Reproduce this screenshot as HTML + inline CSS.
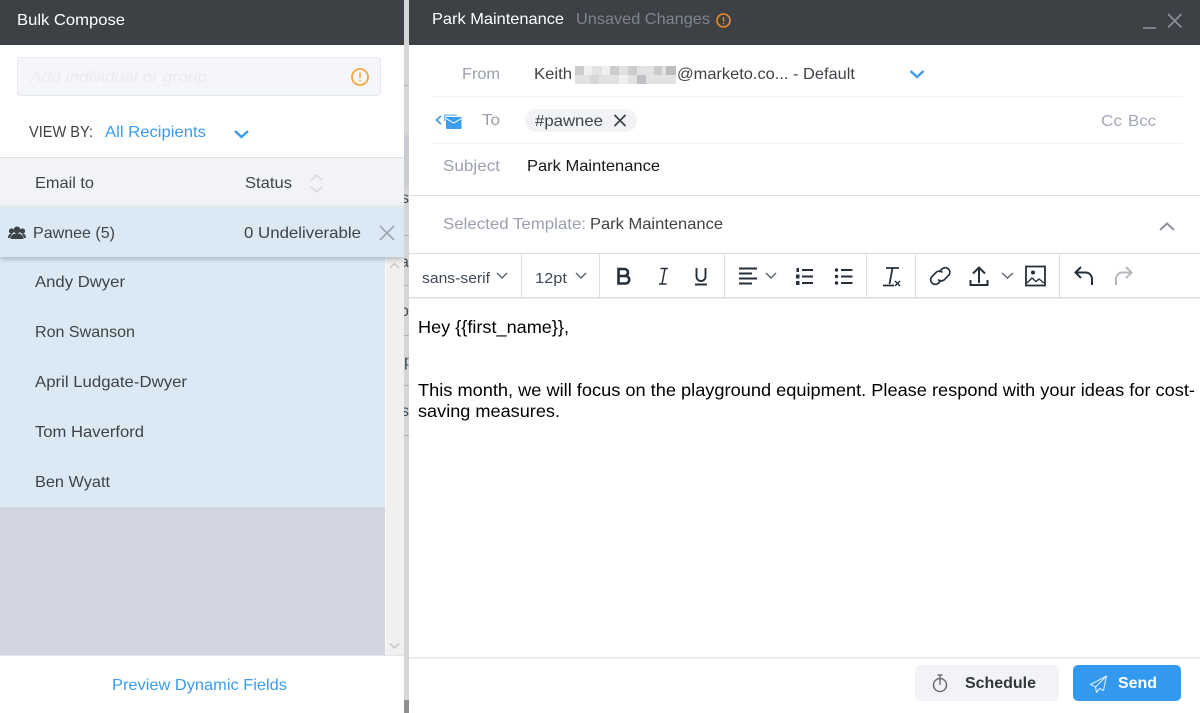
<!DOCTYPE html>
<html><head><meta charset="utf-8"><title>Bulk Compose</title>
<style>
html,body{margin:0;padding:0;background:#fff;width:1200px;height:713px;overflow:hidden}
svg{display:block}
text{font-family:"Liberation Sans",sans-serif;font-size:16px}
.l{fill:#9aa0ac}.d{fill:#3f4347}.b{fill:#3a9bef}
</style></head><body>
<svg width="1200" height="713" viewBox="0 0 1200 713" xmlns="http://www.w3.org/2000/svg">
<defs>
<filter id="sh" x="-5%" y="-30%" width="110%" height="170%"><feDropShadow dx="0" dy="2" stdDeviation="3" flood-color="#000" flood-opacity=".25"/></filter>
<clipPath id="st"><rect x="404" y="0" width="4.500" height="713"/></clipPath>
</defs>
<rect width="1200" height="713" fill="#fff"/>
<!-- left panel -->
<rect x="0" y="0" width="404" height="45" fill="#3d4145"/>
<text x="17" y="25" fill="#fff" textLength="108" lengthAdjust="spacingAndGlyphs">Bulk Compose</text>
<rect x="17.500" y="57.500" width="363" height="38" rx="3" fill="#f5f6fa" stroke="#e6e8ef"/>
<text x="30" y="82" fill="#eaebf0" style="font-style:italic" textLength="177" lengthAdjust="spacingAndGlyphs">Add individual or group</text>
<circle cx="360" cy="77" r="8" fill="none" stroke="#f7a540" stroke-width="1.800"/>
<path d="M360 72.500v5.500M360 79.800v1.600" stroke="#f7a540" stroke-width="1.600" fill="none"/>
<text x="29" y="137" fill="#3c4043" textLength="64" lengthAdjust="spacingAndGlyphs">VIEW BY:</text>
<text x="105" y="137" class="b" textLength="101" lengthAdjust="spacingAndGlyphs">All Recipients</text>
<path d="M235 131l6.500 6 6.500-6" fill="none" stroke="#3a9bef" stroke-width="2.400"/>
<rect x="0" y="157" width="404" height="50" fill="#f2f3f7"/>
<rect x="0" y="157" width="404" height="1" fill="#e3e4e8"/>
<text x="35" y="188" class="d" textLength="59" lengthAdjust="spacingAndGlyphs">Email to</text>
<text x="245" y="188" class="d" textLength="47" lengthAdjust="spacingAndGlyphs">Status</text>
<path d="M311 180.500l5.500-5.500 5.500 5.500M311 186.500l5.500 5.500 5.500-5.500" fill="none" stroke="#d5d7dd" stroke-width="1.500"/>
<!-- rows -->
<rect x="0" y="257" width="385" height="250" fill="#dbe9f5"/>
<rect x="0" y="507" width="385" height="148" fill="#d1d5e0"/>
<rect x="385" y="257" width="19" height="398" fill="#f0f0f0"/>
<rect x="385" y="257" width="1" height="398" fill="#fafafa"/>
<path d="M390 648.500l4.500-4.500M398.500 643.500l-4.500 4.500" fill="none" stroke="#fff" stroke-width="0"/>
<path d="M390 643.500l4.500 4.500 4.500-4.500" fill="none" stroke="#c4c4c4" stroke-width="1.500"/>
<path d="M390 268l4.500-4.500 4.500 4.500" fill="none" stroke="#c8c8c8" stroke-width="1.500"/>
<rect x="0" y="655" width="404" height="1" fill="#e3e5ec"/>
<text x="35" y="287" class="d" textLength="90" lengthAdjust="spacingAndGlyphs">Andy Dwyer</text>
<text x="35" y="337" class="d" textLength="100" lengthAdjust="spacingAndGlyphs">Ron Swanson</text>
<text x="35" y="387" class="d" textLength="152" lengthAdjust="spacingAndGlyphs">April Ludgate-Dwyer</text>
<text x="35" y="437" class="d" textLength="109" lengthAdjust="spacingAndGlyphs">Tom Haverford</text>
<text x="35" y="487" class="d" textLength="75" lengthAdjust="spacingAndGlyphs">Ben Wyatt</text>
<text x="112" y="690" class="b" textLength="175" lengthAdjust="spacingAndGlyphs">Preview Dynamic Fields</text>
<!-- selected row -->
<rect x="0" y="207" width="404" height="50" fill="#dbe9f5" filter="url(#sh)"/>
<g fill="#3f4347"><circle cx="17" cy="230" r="3.500"/><path d="M10.500 239c0-4 3-5.500 6.500-5.500s6.500 1.500 6.500 5.500z"/><circle cx="11.500" cy="231" r="2.600"/><circle cx="22.500" cy="231" r="2.600"/><path d="M8 238c0-3 1.500-4.500 4-4.500l-2 4.500zM26 238c0-3-1.500-4.500-4-4.500l2 4.500z"/></g>
<text x="33" y="238" class="d" textLength="82" lengthAdjust="spacingAndGlyphs">Pawnee (5)</text>
<text x="244" y="238" class="d" textLength="117" lengthAdjust="spacingAndGlyphs">0 Undeliverable</text>
<path d="M380 226l14 14M394 226l-14 14" stroke="#9ea3ad" stroke-width="1.600" fill="none"/>
<!-- divider strip -->
<rect x="404" y="0" width="5" height="713" fill="#d6d6d6"/>
<rect x="404" y="135" width="5" height="52" fill="#c9ccd1"/>
<rect x="404" y="700" width="5" height="13" fill="#909090"/>
<g fill="#b4b4b4"><rect x="404" y="85" width="5" height="1"/><rect x="404" y="235" width="5" height="1"/><rect x="404" y="285" width="5" height="1"/><rect x="404" y="335" width="5" height="1"/><rect x="404" y="385" width="5" height="1"/><rect x="404" y="435" width="5" height="1"/></g>
<g clip-path="url(#st)" fill="#3f4a55">
<text x="401" y="203">s</text>
<text x="400" y="267">a</text>
<text x="400" y="316">o</text>
<text x="404" y="366">p</text>
<text x="401" y="416">s</text>
</g>
<!-- right header -->
<rect x="409" y="0" width="791" height="45" fill="#3d4145"/>
<text x="432" y="24" fill="#fff" textLength="132" lengthAdjust="spacingAndGlyphs">Park Maintenance</text>
<text x="576" y="24" fill="#7d8590" textLength="134" lengthAdjust="spacingAndGlyphs">Unsaved Changes</text>
<circle cx="723.500" cy="20.500" r="6.500" fill="none" stroke="#f08a2c" stroke-width="1.600"/>
<path d="M723.500 17v4.500M723.500 23v1.400" stroke="#f08a2c" stroke-width="1.400" fill="none"/>
<path d="M1143 28h13" stroke="#8b929b" stroke-width="1.600"/>
<path d="M1168 14l13.500 13.500M1181.500 14l-13.500 13.500" stroke="#8b929b" stroke-width="1.600" fill="none"/>
<!-- from -->
<text x="462" y="79" class="l" textLength="38" lengthAdjust="spacingAndGlyphs">From</text>
<text x="534" y="79" class="d" textLength="38" lengthAdjust="spacingAndGlyphs">Keith</text>
<rect x="575" y="66" width="101" height="18" fill="#e2e2e2"/>
<g fill="#cacccd"><rect x="575" y="66" width="9" height="9"/><rect x="610" y="66" width="9" height="9"/><rect x="628" y="66" width="9" height="9"/><rect x="654" y="66" width="8" height="9"/><rect x="637" y="75" width="9" height="9" fill="#bcc0c5"/><rect x="590" y="75" width="9" height="9" fill="#d6d6d6"/><rect x="666" y="66" width="10" height="9" fill="#bdbdbd"/></g>
<g fill="#efefef"><rect x="584" y="66" width="8" height="9"/><rect x="619" y="75" width="9" height="9"/><rect x="602" y="66" width="8" height="9"/></g>
<text x="677" y="79" class="d" textLength="178" lengthAdjust="spacingAndGlyphs">@marketo.co... - Default</text>
<path d="M910.500 71l6.500 6 6.500-6" fill="none" stroke="#3a9bef" stroke-width="2.400"/>
<rect x="432" y="96" width="750" height="1" fill="#f1f2f5"/>
<!-- to -->
<path d="M441 116l-4.500 4 4.500 4" fill="none" stroke="#3a9bef" stroke-width="1.600"/>
<path d="M444 114.500h13v1.300h-13zM444 116h1.500v5h-1.500z" fill="#6db5f3"/>
<rect x="446" y="117" width="15.500" height="12" rx="1" fill="#3a9bef"/>
<path d="M446 118.500l7.700 4.500 7.800-4.500" fill="none" stroke="#fff" stroke-width="1"/>
<text x="482" y="125" class="l" textLength="18" lengthAdjust="spacingAndGlyphs">To</text>
<rect x="525" y="109" width="112" height="23" rx="11.500" fill="#f2f3f7"/>
<text x="535" y="126" class="d" textLength="68" lengthAdjust="spacingAndGlyphs">#pawnee</text>
<path d="M614.500 115l11 11M625.500 115l-11 11" stroke="#3f4347" stroke-width="1.700" fill="none"/>
<text x="1101" y="126" fill="#a3a9b5" textLength="21" lengthAdjust="spacingAndGlyphs">Cc</text>
<text x="1128" y="126" fill="#a3a9b5" textLength="28" lengthAdjust="spacingAndGlyphs">Bcc</text>
<rect x="432" y="143" width="750" height="1" fill="#f1f2f5"/>
<!-- subject -->
<text x="443" y="171" class="l" textLength="57" lengthAdjust="spacingAndGlyphs">Subject</text>
<text x="527" y="171" fill="#14171a" textLength="133" lengthAdjust="spacingAndGlyphs">Park Maintenance</text>
<rect x="409" y="195" width="791" height="1" fill="#dfe0e6"/>
<!-- template -->
<text x="443" y="229" class="l" textLength="143" lengthAdjust="spacingAndGlyphs">Selected Template:</text>
<text x="590" y="229" class="d" textLength="133" lengthAdjust="spacingAndGlyphs">Park Maintenance</text>
<path d="M1160 230l7-6.500 7 6.500" fill="none" stroke="#8d929b" stroke-width="2"/>
<rect x="409" y="253" width="791" height="1" fill="#dedede"/>
<!-- toolbar -->
<rect x="409" y="297" width="791" height="1.500" fill="#dedede"/>
<g fill="#dedede"><rect x="521" y="254" width="1" height="44"/><rect x="599" y="254" width="1" height="44"/><rect x="724" y="254" width="1" height="44"/><rect x="866" y="254" width="1" height="44"/><rect x="915" y="254" width="1" height="44"/><rect x="1059" y="254" width="1" height="44"/></g>
<text x="422" y="283" style="font-size:15px" fill="#3f4a55" textLength="68" lengthAdjust="spacingAndGlyphs">sans-serif</text>
<path d="M497 273l5 5 5-5" fill="none" stroke="#5f6770" stroke-width="1.500"/>
<text x="535" y="283" style="font-size:15px" fill="#3f4a55" textLength="32" lengthAdjust="spacingAndGlyphs">12pt</text>
<path d="M576 273l5 5 5-5" fill="none" stroke="#5f6770" stroke-width="1.500"/>
<g fill="none" stroke="#25303b">
<path d="M618.500 269h6a3.500 3.500 0 0 1 0 7h-6zM618.500 276h7a3.500 3.500 0 0 1 0 7.500h-7z" stroke-width="2.600"/>
<path d="M660.500 268.500h7.500M659 284h7.500M665 268.500l-3 15.500" stroke-width="1.500"/>
<path d="M696.500 268v8.500a4.500 4.500 0 0 0 9 0v-8.500M695 284.500h12" stroke-width="1.900"/>
<path d="M739 268.500h18M739 273.500h13M739 278.500h18M739 283.500h13" stroke-width="2"/>
<path d="M802 270h11M802 276.500h11M802 283h11" stroke-width="2"/>
<path d="M841 270h11.500M841 276.500h11.500M841 283h11.500" stroke-width="2"/>
<path d="M886 268h13M892.500 268l-3 16M883 285.500h11" stroke-width="1.800"/>
<path d="M895 281l5 5M900 281l-5 5" stroke-width="1.400"/>
<path d="M939 272l3-3a4.500 4.500 0 0 1 6.500 6.500l-4 4a4.500 4.500 0 0 1-6.500 0M941.500 280l-3 3a4.500 4.500 0 0 1-6.500-6.500l4-4a4.500 4.500 0 0 1 6.500 0" stroke-width="1.600"/>
<path d="M979 283v-15M973 273.500l6-6 6 6M970.500 280v5h17v-5" stroke-width="2"/>
<rect x="1026" y="266.500" width="19" height="19" stroke-width="1.800"/>
<path d="M1027 283l5-5 4 3.500 3-2.500 5 4" stroke-width="1.400"/>
<path d="M1081 267l-5.500 5.500 5.500 5.500M1075.500 272.500h10a6.500 6.500 0 0 1 6.500 6.500v6" stroke-width="2"/>
</g>
<circle cx="1033" cy="272.500" r="2" fill="#25303b"/>
<g fill="#25303b"><rect x="796.500" y="268" width="2.500" height="4"/><rect x="796" y="274.500" width="3.500" height="4"/><rect x="796" y="281" width="3.500" height="4"/><circle cx="836.500" cy="270" r="1.700"/><circle cx="836.500" cy="276.500" r="1.700"/><circle cx="836.500" cy="283" r="1.700"/></g>
<path d="M766 273l5 5 5-5M1002 273l5.500 5 5.500-5" fill="none" stroke="#5f6770" stroke-width="1.500"/>
<path d="M1126 267l5.500 5.500-5.500 5.500M1131.500 272.500h-9a6.500 6.500 0 0 0-6.500 6.500v6" fill="none" stroke="#b4b9bf" stroke-width="2"/>
<!-- body -->
<text x="418" y="333" style="font-size:17.900px" fill="#000" textLength="151" lengthAdjust="spacingAndGlyphs">Hey {{first_name}},</text>
<text x="418" y="396" style="font-size:17.900px" fill="#000" textLength="777" lengthAdjust="spacingAndGlyphs">This month, we will focus on the playground equipment. Please respond with your ideas for cost-</text>
<text x="418" y="417" style="font-size:17.900px" fill="#000" textLength="142" lengthAdjust="spacingAndGlyphs">saving measures.</text>
<!-- footer -->
<rect x="409" y="657" width="791" height="1.500" fill="#e3e5ea"/>
<rect x="915" y="665" width="144" height="36" rx="5" fill="#f2f3f7"/>
<circle cx="940" cy="685" r="6.500" fill="none" stroke="#6d6f73" stroke-width="1.500"/>
<path d="M940 675v10M937.500 675h5" stroke="#6d6f73" stroke-width="1.400" fill="none"/>
<text x="965" y="688" fill="#333639" style="font-weight:bold" textLength="71" lengthAdjust="spacingAndGlyphs">Schedule</text>
<rect x="1073" y="665" width="108" height="36" rx="5" fill="#3399ee"/>
<path d="M1106.500 676l-16 8.500 5 2.500zM1106.500 676l-11 11 1 5.500 3-4 4 2z" fill="none" stroke="#d5eafc" stroke-width="1.100" stroke-linejoin="round"/>
<text x="1118" y="688" fill="#fff" style="font-weight:bold" textLength="39" lengthAdjust="spacingAndGlyphs">Send</text>
</svg>
</body></html>
